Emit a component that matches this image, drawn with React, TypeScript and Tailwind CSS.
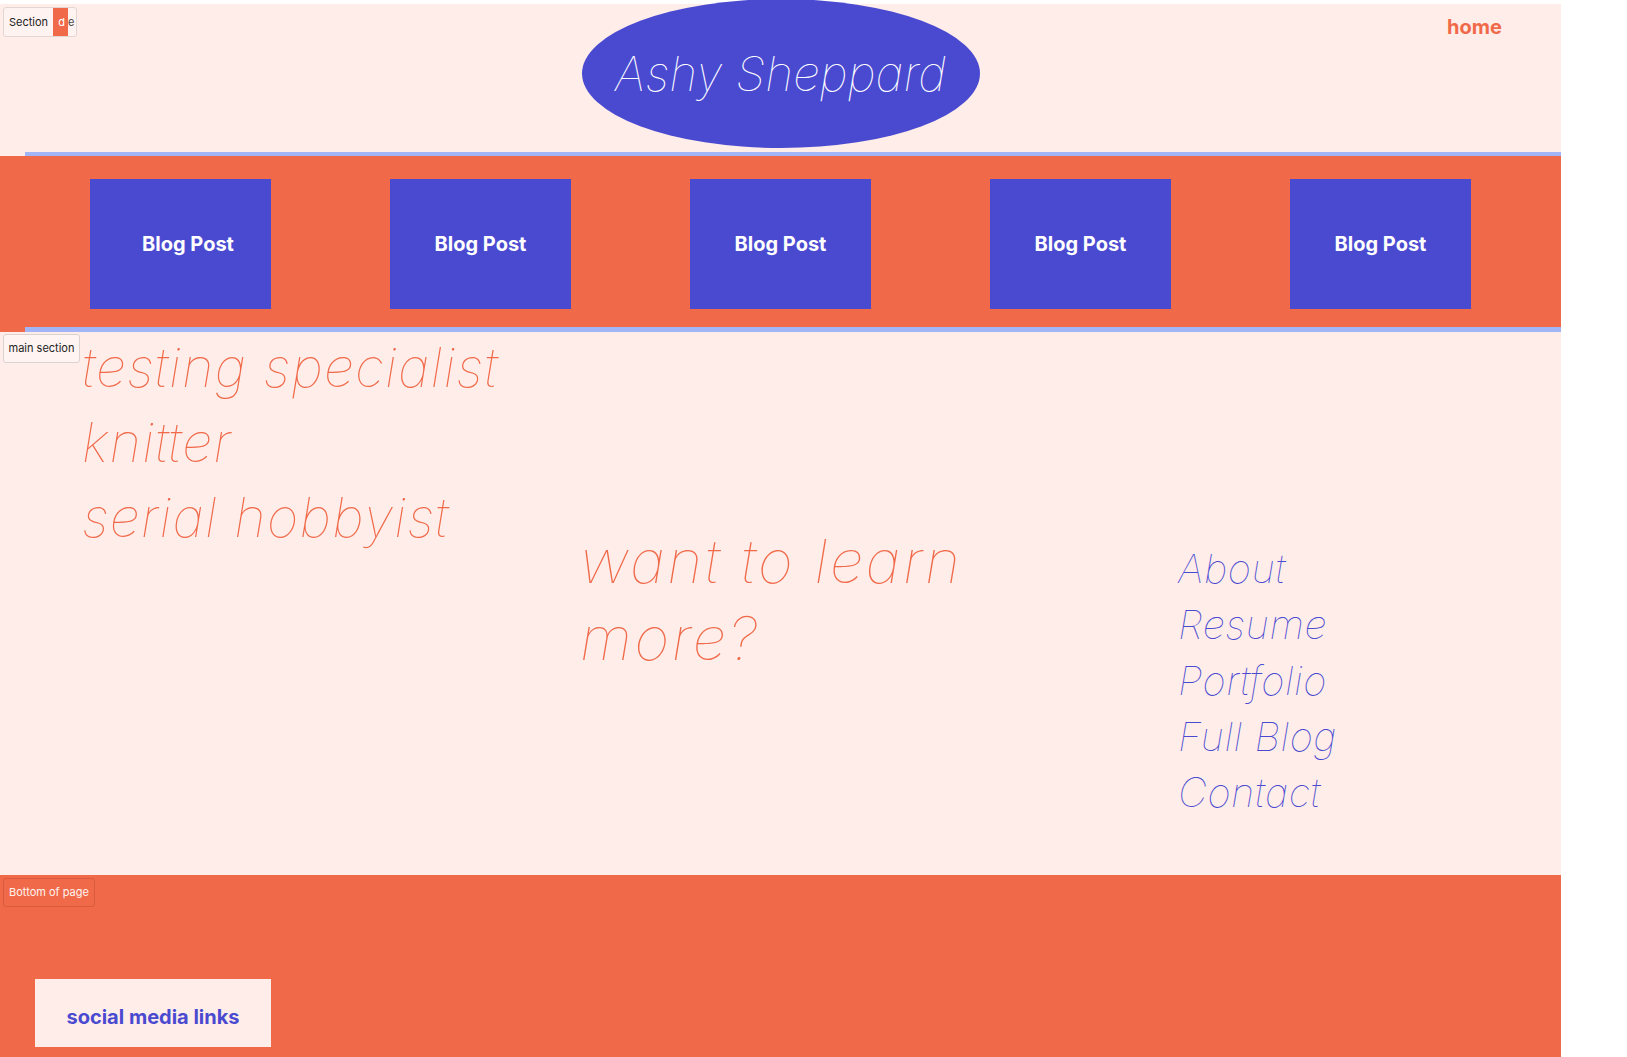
import React from "react";

function BlogCard({ first }: { first?: boolean }) {
  return (
    <div
      className={`w-[181px] h-[130px] bg-[#4a4ad1] flex items-center justify-center text-white text-[20px] font-bold leading-[24px] ${
        first ? "pl-[15px]" : ""
      }`}
    >
      Blog Post
    </div>
  );
}

export default function App() {
  return (
    <div
      className="w-[1561px] mt-[4px] bg-[#ffede9] relative"
      style={{ fontFamily: "Inter, 'Noto Sans', sans-serif" }}
    >
      {/* Header */}
      <header className="relative h-[148px] flex justify-center">
        <div className="-mt-[5px] w-[398px] h-[149px] rounded-[50%] bg-[#4a4ad1] flex items-center justify-center">
          <span className="text-white italic font-thin text-[48px] leading-[58px]">
            Ashy Sheppard
          </span>
        </div>
        <a className="absolute right-[59px] top-[11px] text-[#f06a4a] font-bold text-[20px] leading-[24px]">
          home
        </a>
        <div className="absolute left-[3px] top-[3px] h-[30px] w-[74px] rounded-[3px] border border-[#e2d6d3] bg-[#fff3f1] text-[11px] text-[#222] overflow-hidden">
          <span className="absolute left-[5px] top-0 h-full flex items-center">Section</span>
          <span className="absolute left-[49px] top-0 h-full w-[15px] bg-[#f06a4a] text-white flex items-center justify-end pr-[3px] overflow-hidden">
            d
          </span>
          <span className="absolute left-[64px] top-0 h-full flex items-center text-[#444]">e</span>
        </div>
      </header>

      {/* Blog band */}
      <section className="h-[180px] flex flex-col bg-[#f06a4a]">
        <div className="h-[4px] flex">
          <div className="w-[25px] bg-[#ffede9]" />
          <div className="flex-1 bg-[#a1b5f7]" />
        </div>
        <div className="flex-1 flex items-start justify-center gap-[119px] pt-[23px]">
          <BlogCard first />
          <BlogCard />
          <BlogCard />
          <BlogCard />
          <BlogCard />
        </div>
        <div className="h-[5px] flex">
          <div className="w-[25px]" />
          <div className="flex-1 bg-[#a1b5f7]" />
        </div>
      </section>

      {/* Main section */}
      <main className="relative h-[543px] flex">
        <div className="absolute left-[3px] top-[2px] h-[29px] w-[77px] rounded-[3px] border border-[#dcd2cf] bg-[#fff4f2] flex items-center justify-center text-[11px] text-[#222]">
          main section
        </div>
        <div className="pl-[82px] -mt-[2px] w-[580px] shrink-0 text-[#f06a4a] italic font-thin text-[54px] leading-[75px] tracking-[1.2px]">
          <p>testing specialist</p>
          <p>knitter</p>
          <p>serial hobbyist</p>
        </div>
        <div className="pt-[191px] w-[598px] shrink-0 text-[#f06a4a] italic font-thin text-[60px] leading-[77px] tracking-[2.5px]">
          <p>want to learn</p>
          <p>more?</p>
        </div>
        <nav className="pt-[209px] text-[#4a4ad1] italic font-thin text-[40px] leading-[56px] tracking-[0.5px]">
          <p>About</p>
          <p>Resume</p>
          <p>Portfolio</p>
          <p>Full Blog</p>
          <p>Contact</p>
        </nav>
      </main>

      {/* Footer */}
      <footer className="relative h-[182px] bg-[#f06a4a]">
        <div className="absolute left-[3px] top-[3px] h-[29px] w-[92px] rounded-[3px] border border-[#d95a3c] flex items-center justify-center text-[11px] text-[#fff3ef]">
          Bottom of page
        </div>
        <div className="absolute left-[35px] top-[104px] w-[236px] h-[68px] bg-[#ffede9] pt-[26px] text-center text-[#4a4ad1] font-bold text-[20px] leading-[24px]">
          social media links
        </div>
      </footer>
    </div>
  );
}
